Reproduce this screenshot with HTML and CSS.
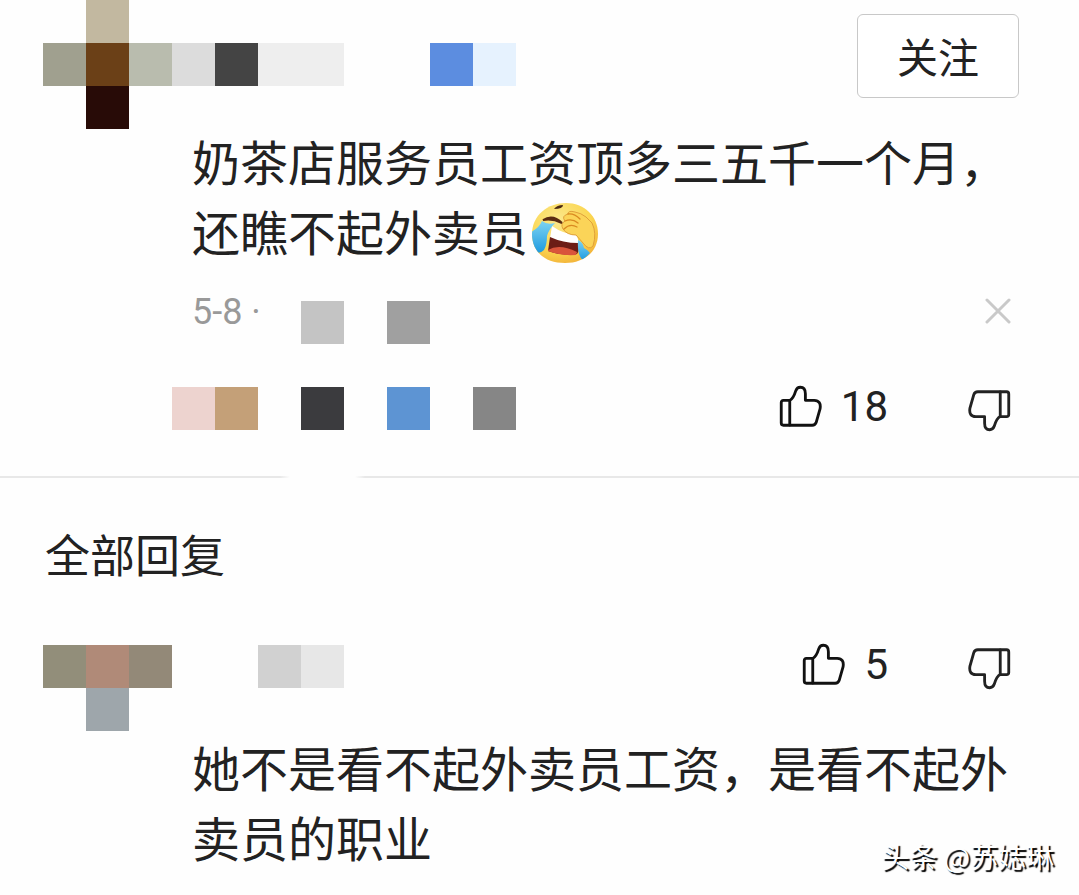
FILE: index.html
```html
<!DOCTYPE html>
<html lang="zh-CN">
<head>
<meta charset="utf-8">
<meta name="viewport" content="width=device-width, initial-scale=1">
<title>全部回复</title>
<link rel="stylesheet" href="styles.css">
</head>
<body>
<svg class="defs" aria-hidden="true">
  <symbol id="thumb-up" viewBox="0 0 44 44">
    <g fill="none" stroke="currentColor" stroke-width="2.9" stroke-linejoin="round" stroke-linecap="round">
      <path d="M11 15.8H4.5Q2.3 15.8 2.3 18V39Q2.3 41.2 4.5 41.2H34Q37 41.2 38 38.4L42 24.5Q43.500 16 36 15.700H27V9Q27 2.300 21.800 2.300Q18.500 2.300 17.200 5.800C15.600 11 14 14.500 11 15.800Z"/>
      <path d="M11 16V41"/>
    </g>
  </symbol>
  <symbol id="thumb-down" viewBox="0 0 44 44">
    <use href="#thumb-up" width="44" height="44" transform="rotate(180 22 22)"/>
  </symbol>
</svg>

<main class="page">
  <article class="comment">
    <header class="comment-head">
      <svg class="mosaic" width="516" height="129" viewBox="0 0 12 3" shape-rendering="crispEdges" role="img" aria-label="用户">
        <path fill="#c2b8a0" d="M2 0h1v1h-1z"/><path fill="#a0a08f" d="M1 1h1v1h-1z"/>
        <path fill="#6b4017" d="M2 1h1v1h-1z"/><path fill="#b9bcae" d="M3 1h1v1h-1z"/>
        <path fill="#dcdcdc" d="M4 1h1v1h-1z"/><path fill="#444" d="M5 1h1v1h-1z"/>
        <path fill="#eee" d="M6 1h2v1h-2z"/><path fill="#5c8de0" d="M10 1h1v1h-1z"/>
        <path fill="#e6f2fe" d="M11 1h1v1h-1z"/><path fill="#280b07" d="M2 2h1v1h-1z"/>
      </svg>
      <button class="follow" type="button">关注</button>
    </header>
    <p class="text">奶茶店服务员工资顶多三五千一个月，<br>还瞧不起外卖员<svg class="emoji" viewBox="0 0 68 62" role="img" aria-label="笑哭捂脸">
        <defs>
          <radialGradient id="face" cx=".4" cy=".3" r=".8"><stop offset="0" stop-color="#fbe88c"/><stop offset=".6" stop-color="#fbd650"/><stop offset="1" stop-color="#f0a832"/></radialGradient>
          <linearGradient id="tear" x1="0" y1="0" x2="0" y2="1"><stop offset="0" stop-color="#7dd3f2"/><stop offset="1" stop-color="#1f9be0"/></linearGradient>
          <clipPath id="round"><path d="M1 32C1 13 17 1 35 1C53 1 67 14 67 32C67 49 54 61 34 61C14 61 1 50 1 32Z"/></clipPath>
        </defs>
        <g clip-path="url(#round)">
          <path fill="url(#face)" d="M0 0h68v62H0z"/>
          <path fill="#fff" d="M21 24Q32 32 46 33L48 42Q33 42 19 36Z"/>
          <path fill="#6c1d16" d="M19 35Q32 41 47 41Q49 48 46 52Q30 54 17 49Z"/>
          <path fill="#d9543b" d="M17 48Q28 41 46 50L45 53Q29 54 17 49Z"/>
          <path fill="url(#tear)" d="M11 19Q16 23 24 21Q18 27 16 34Q16 43 13 48Q9 52 5 50L0 40V30Q8 26 11 19Z"/>
          <path fill="url(#tear)" d="M47 38Q52 40 53 46Q57 48 59 51L52 58Q46 54 47 38Z"/>
        </g>
        <path fill="#4b2a13" d="M23 7Q26 3 32 3Q32 7 23 7Z"/>
        <path d="M12 18Q22 12 31 21Q21 16 12 18Z" fill="#5a2b12" stroke="#5a2b12" stroke-width="2"/>
        <path fill="#fbd458" stroke="#e0a03a" d="M32 27Q29 22 34 19Q30 14 37 12Q37 8 44 10Q50 11 55 15L61 21Q66 31 62 44Q58 49 52 41L45 33Q36 33 32 27Z"/>
        <path fill="none" stroke="#d98a20" stroke-width="1.300" stroke-linecap="round" d="M37 12Q43 11 49 17M34 19Q41 16 47 21M33 27Q39 21 46 25"/>
      </svg></p>
    <div class="meta">
      <time class="date">5-8 ·</time>
      <svg class="mosaic meta-mosaic" width="129" height="43" viewBox="0 0 3 1" shape-rendering="crispEdges" aria-hidden="true">
        <path fill="#c4c4c4" d="M0 0h1v1h-1z"/><path fill="#a0a0a0" d="M2 0h1v1h-1z"/>
      </svg>
      <button class="icon-button close" type="button" aria-label="关闭">
        <svg width="26" height="26" viewBox="0 0 26 26"><path d="M2 2L24 24M24 2L2 24" fill="none" stroke="#c9c9c9" stroke-width="3" stroke-linecap="round"/></svg>
      </button>
    </div>
    <div class="actions">
      <svg class="mosaic actions-mosaic" width="344" height="43" viewBox="0 0 8 1" shape-rendering="crispEdges" aria-hidden="true">
        <path fill="#edd3cf" d="M0 0h1v1h-1z"/><path fill="#c4a078" d="M1 0h1v1h-1z"/>
        <path fill="#3b3b3e" d="M3 0h1v1h-1z"/><path fill="#5d94d3" d="M5 0h1v1h-1z"/>
        <path fill="#868686" d="M7 0h1v1h-1z"/>
      </svg>
      <div class="votes">
        <button class="icon-button" type="button" aria-label="赞 18"><svg class="thumb"><use href="#thumb-up"/></svg><span class="count">18</span></button>
        <button class="icon-button down" type="button" aria-label="踩"><svg class="thumb"><use href="#thumb-down"/></svg></button>
      </div>
    </div>
  </article>

  <hr class="divider">

  <section class="replies">
    <h2 class="title">全部回复</h2>
    <article class="reply">
      <header class="reply-head">
        <svg class="mosaic" width="344" height="86" viewBox="0 0 8 2" shape-rendering="crispEdges" role="img" aria-label="用户">
          <path fill="#928e7a" d="M1 0h1v1h-1z"/><path fill="#b08a78" d="M2 0h1v1h-1z"/>
          <path fill="#938978" d="M3 0h1v1h-1z"/><path fill="#9ea6ab" d="M2 1h1v1h-1z"/>
          <path fill="#d1d1d1" d="M6 0h1v1h-1z"/><path fill="#e7e7e7" d="M7 0h1v1h-1z"/>
        </svg>
        <div class="votes">
          <button class="icon-button" type="button" aria-label="赞 5"><svg class="thumb"><use href="#thumb-up"/></svg><span class="count">5</span></button>
          <button class="icon-button down" type="button" aria-label="踩"><svg class="thumb"><use href="#thumb-down"/></svg></button>
        </div>
      </header>
      <p class="text">她不是看不起外卖员工资，是看不起外<br>卖员的职业</p>
    </article>
  </section>
  <div class="watermark">头条 @苏娡琳</div>
</main>
</body>
</html>
```
FILE: styles.css
```css
* {
  box-sizing: border-box;
}

body {
  margin: 0;
  background: #fefefe;
  color: #222;
  font-family: Roboto, "Noto Sans CJK SC", sans-serif;
}

.defs {
  position: absolute;
  width: 0;
  height: 0;
}

.page {
  position: relative;
  min-height: 100vh;
}

.mosaic {
  display: block;
  flex: none;
}

.comment-head {
  display: flex;
  justify-content: space-between;
  align-items: flex-start;
  height: 125px;
  padding-right: 60px;
}

.follow {
  margin-top: 14px;
  width: 162px;
  height: 84px;
  padding: 0 0 2px;
  border: 1px solid #c8c8c8;
  border-radius: 6px;
  background: #fff;
  color: #222;
  font: 400 41px/78px "Noto Sans CJK SC", sans-serif;
}

.text {
  margin: 0;
  padding: 0 60px 0 192px;
  font: 400 48px/70px "Noto Sans CJK SC", sans-serif;
}

.emoji {
  width: 68px;
  height: 62px;
  margin-left: 3px;
  vertical-align: -13px;
}

.meta {
  display: flex;
  align-items: flex-start;
  height: 122px;
  padding: 25px 68px 0 192px;
}

.date {
  width: 109px;
  color: #999;
  font-size: 36px;
  line-height: 44px;
}

.meta-mosaic {
  margin-top: 11px;
}

.icon-button {
  display: flex;
  align-items: center;
  padding: 0;
  border: 0;
  background: none;
  color: #111;
  font: inherit;
}

.close {
  margin: 8px 0 0 auto;
}

.actions {
  display: flex;
  justify-content: space-between;
  align-items: flex-start;
  padding: 0 68px 0 172px;
}

.votes {
  display: flex;
  align-items: flex-start;
  gap: 80px;
  margin-top: -2px;
}

.thumb {
  width: 43px;
  height: 43px;
}

.count {
  margin-left: 19px;
  color: #222;
  font-size: 42px;
  line-height: 42px;
}

.down {
  padding-top: 4px;
  color: #222;
}

.divider {
  height: 2px;
  margin: 44px 0 0;
  border: 0;
  background: linear-gradient(to right, #e8e8e8 280px, transparent 290px, transparent 355px, #e8e8e8 365px);
}

.title {
  margin: 0;
  padding: 43px 45px 58px;
  font: 400 45px/66px "Noto Sans CJK SC", sans-serif;
}

.reply-head {
  display: flex;
  justify-content: space-between;
  align-items: flex-start;
  padding-right: 68px;
}

.watermark {
  position: absolute;
  right: 25px;
  bottom: 19px;
  color: #fff;
  font: 400 28px/40px "Noto Sans CJK SC", sans-serif;
  text-shadow: 2px 2px 1px #000;
}
```
